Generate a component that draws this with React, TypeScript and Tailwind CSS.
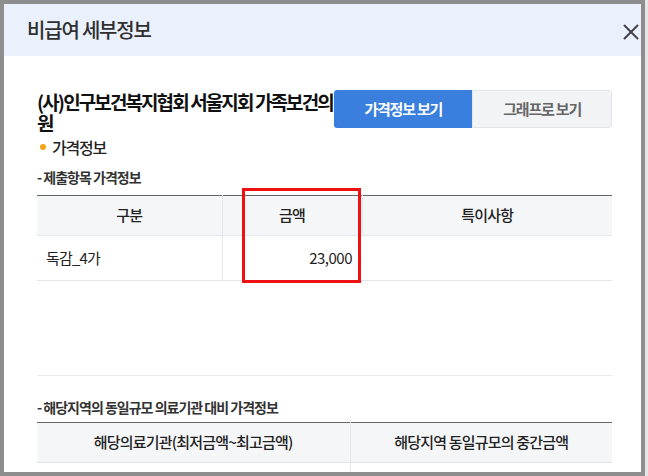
import { X } from 'lucide-react';

const font = { fontFamily: '"Noto Sans CJK KR", "Noto Sans", sans-serif' };

export default function App() {
  return (
    <div className="flex w-[648px] h-[476px] bg-[#8e8e8e] overflow-hidden" style={font}>
      <div className="pt-[4px] pl-[4px]">
        <div className="relative w-[637px] h-[468px] bg-white overflow-hidden">
          <div className="h-[52px] bg-[#eaf1fd] flex items-center pl-[23px]">
            <h2 className="text-[20px] font-medium text-[#2f2f2f] tracking-[-1.2px]">비급여 세부정보</h2>
          </div>
          <button className="absolute right-[-3px] top-[15px] text-[#444]">
            <X className="w-[26px] h-[26px]" strokeWidth={1.8} />
          </button>

          <div className="pl-[33px] pr-[29px]">
            <div className="flex justify-between items-start pt-[34px] h-[76px]">
              <h3 className="w-[300px] text-[19px] leading-[21px] font-bold text-[#111] tracking-[-1.9px] pt-[1px]">
                (사)인구보건복지협회 서울지회 가족보건의원
              </h3>
              <div className="flex w-[280px] h-[38px]">
                <button className="flex-1 bg-[#3a7fdd] rounded-l-[3px] text-white text-[15px] font-bold tracking-[-1.2px]">
                  가격정보 보기
                </button>
                <button className="flex-1 bg-[#f1f3f5] border border-[#e2e5e8] rounded-r-[3px] text-[#666] text-[15px] font-bold tracking-[-1.2px]">
                  그래프로 보기
                </button>
              </div>
            </div>

            <div className="flex items-center mt-[4px] pl-[3px] h-[22px]">
              <span className="w-[6px] h-[6px] rounded-full bg-[#f7a21b] mr-[6px]" />
              <span className="text-[16px] font-medium text-[#222] tracking-[-1.2px]">가격정보</span>
            </div>

            <p className="mt-[9px] text-[14px] font-bold text-[#333] tracking-[-1px] leading-[20px]">- 제출항목 가격정보</p>

            <div className="mt-[8px] relative">
              <table className="w-full border-collapse border-t border-[#666] text-[15px] text-[#222] tracking-[-0.8px]">
                <thead>
                  <tr className="h-[40px] bg-[#f5f6f8] border-b border-[#e4e6e9]">
                    <th className="w-[185px] font-medium border-r border-[#e4e6e9]">구분</th>
                    <th className="w-[140px] font-medium border-r border-[#e4e6e9]">금액</th>
                    <th className="font-medium">특이사항</th>
                  </tr>
                </thead>
                <tbody>
                  <tr className="h-[45px] border-b border-[#e4e6e9]">
                    <td className="pl-[9px] border-r border-[#e4e6e9]">독감_4가</td>
                    <td className="pr-[10px] text-right tracking-[-0.5px]">23,000</td>
                    <td></td>
                  </tr>
                </tbody>
              </table>
              <div className="absolute left-[205px] top-[-7px] w-[119px] h-[95px] border-[3px] border-[#ee1111]" />
            </div>

            <div className="h-[95px] border-b border-[#e9ebee]" />

            <p className="mt-[21px] text-[14px] font-bold text-[#333] tracking-[-1px] leading-[20px]">- 해당지역의 동일규모 의료기관 대비 가격정보</p>

            <table className="mt-[5px] w-full border-collapse border-t border-[#666] text-[15px] text-[#222] tracking-[-0.8px]">
              <thead>
                <tr className="h-[40px] bg-[#f5f6f8] border-b border-[#e4e6e9]">
                  <th className="w-[313px] font-medium border-r border-[#e4e6e9]">해당의료기관(최저금액~최고금액)</th>
                  <th className="font-medium">해당지역 동일규모의 중간금액</th>
                </tr>
              </thead>
              <tbody>
                <tr className="h-[45px]">
                  <td className="border-r border-[#e4e6e9]"></td>
                  <td></td>
                </tr>
              </tbody>
            </table>
          </div>
        </div>
      </div>
      <div className="ml-[4px] w-[3px] h-full bg-[#e6e6e6]" />
    </div>
  );
}
